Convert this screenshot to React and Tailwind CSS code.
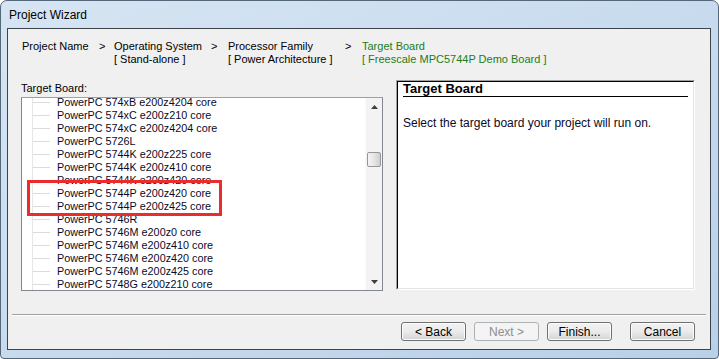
import React from 'react';

const boards = [
  'PowerPC 574xB e200z4204 core',
  'PowerPC 574xC e200z210 core',
  'PowerPC 574xC e200z4204 core',
  'PowerPC 5726L',
  'PowerPC 5744K e200z225 core',
  'PowerPC 5744K e200z410 core',
  'PowerPC 5744K e200z420 core',
  'PowerPC 5744P e200z420 core',
  'PowerPC 5744P e200z425 core',
  'PowerPC 5746R',
  'PowerPC 5746M e200z0 core',
  'PowerPC 5746M e200z410 core',
  'PowerPC 5746M e200z420 core',
  'PowerPC 5746M e200z425 core',
  'PowerPC 5748G e200z210 core',
];

const WinButton = ({ children, disabled }) => (
  <div
    className={
      disabled
        ? 'w-[65px] h-[19px] flex items-center justify-center rounded-[3px] border border-[#adb2b5] bg-[#f4f4f4] text-[#8d8d8d]'
        : 'w-[65px] h-[19px] flex items-center justify-center rounded-[3px] border border-[#707070] bg-gradient-to-b from-[#f2f2f2] via-[#ebebeb] to-[#d4d4d4] text-black shadow-[inset_0_0_0_1px_#fcfcfc]'
    }
  >
    {children}
  </div>
);

const App = () => {
  return (
    <div
      className="w-[719px] h-[359px] rounded-t-[7px] rounded-b-[4px] border border-[#55677a] bg-gradient-to-br from-[#d6e5f3] via-[#c8dbee] to-[#b9d0e8] pl-[6px] pr-[7px] pb-[8px] flex flex-col"
      style={{ fontFamily: '"Liberation Sans", Arial, sans-serif' }}
    >
      {/* Title bar */}
      <div className="h-[27px] flex items-center pl-[2px] text-[12px] text-black">Project Wizard</div>

      {/* Client area */}
      <div className="flex-1 border border-[#3d444c] bg-[#f0f0f0] flex flex-col text-[11px] text-black">
        {/* Breadcrumb */}
        <div className="flex pt-[11px] pl-[14px] leading-[13px]">
          <div className="w-[77px]">Project Name</div>
          <div className="w-[15px]">&gt;</div>
          <div className="w-[97px]">
            <div>Operating System</div>
            <div>[ Stand-alone ]</div>
          </div>
          <div className="w-[17px]">&gt;</div>
          <div className="w-[117px]">
            <div>Processor Family</div>
            <div>[ Power Architecture ]</div>
          </div>
          <div className="w-[17px]">&gt;</div>
          <div className="text-[#1b7d1b]">
            <div>Target Board</div>
            <div>[ Freescale MPC5744P Demo Board ]</div>
          </div>
        </div>

        {/* Main row */}
        <div className="mt-[14px] h-[211px] flex pl-[13px]">
          <div className="relative w-[362px] flex flex-col">
            <div className="mt-[1px] h-[14px] leading-[14px]">Target Board:</div>
            <div className="mt-[2px] h-[194px] border border-[#828790] border-t-[#a0a0a0] bg-white flex overflow-hidden">
              <div className="relative flex-1 overflow-hidden">
                <div className="absolute left-[10px] top-0 bottom-0 w-px bg-[#e6e6e6]" />
                <div className="-mt-[2px] text-[10.8px] text-[#0a0a28]">
                  {boards.map((b) => (
                    <div key={b} className="h-[13px] flex items-center">
                      <div className="ml-[11px] w-[17px] h-px bg-[#dcdcdc]" />
                      <div className="ml-[7px] leading-[13px] whitespace-nowrap">{b}</div>
                    </div>
                  ))}
                </div>
              </div>
              {/* Scrollbar */}
              <div className="w-[17px] flex flex-col bg-[#f3f3f3] border-l border-[#fafafa]">
                <div className="h-[17px] flex items-center justify-center">
                  <svg width="7" height="4" viewBox="0 0 7 4">
                    <path d="M0 4 L3.5 0 L7 4 Z" fill="#3f3f3f" />
                  </svg>
                </div>
                <div className="flex-1">
                  <div className="mt-[37px] mx-[1px] h-[15px] rounded-[2px] border border-[#979797] bg-gradient-to-r from-[#f4f4f4] via-[#e6e6e6] to-[#cfcfcf]" />
                </div>
                <div className="h-[17px] flex items-center justify-center">
                  <svg width="7" height="4" viewBox="0 0 7 4">
                    <path d="M0 0 L7 0 L3.5 4 Z" fill="#3f3f3f" />
                  </svg>
                </div>
              </div>
            </div>
            {/* highlight */}
            <div className="absolute left-[6px] top-[100px] w-[195px] h-[36px] border-[3px] border-[#ea2c2c]" />
          </div>

          <div className="ml-[13px] w-[299px] h-[210px] border-t border-l border-[#a0a0a0] border-r border-b border-r-white border-b-white">
            <div className="h-full border-t border-l border-black border-r border-b border-r-[#e3e3e3] border-b-[#e3e3e3] bg-white pl-[5px] pr-[5px]">
              <div className="h-[15px] border-b-[1.5px] border-black text-[13px] font-bold leading-[14px]">
                Target Board
              </div>
              <div className="mt-[19px] text-[12px] leading-[14px] text-[#0a0a28]">
                Select the target board your project will run on.
              </div>
            </div>
          </div>
        </div>

        {/* Separator */}
        <div className="mt-[23px] mx-[4px] h-px bg-[#a0a0a0]" />
        <div className="mx-[4px] h-px bg-white" />

        {/* Buttons */}
        <div className="mt-[6px] flex justify-end pr-[15px] text-[12px]">
          <WinButton>&lt; Back</WinButton>
          <div className="ml-[8px]">
            <WinButton disabled>Next &gt;</WinButton>
          </div>
          <div className="ml-[8px]">
            <WinButton>Finish...</WinButton>
          </div>
          <div className="ml-[18px]">
            <WinButton>Cancel</WinButton>
          </div>
        </div>
      </div>
    </div>
  );
};

export default App;
